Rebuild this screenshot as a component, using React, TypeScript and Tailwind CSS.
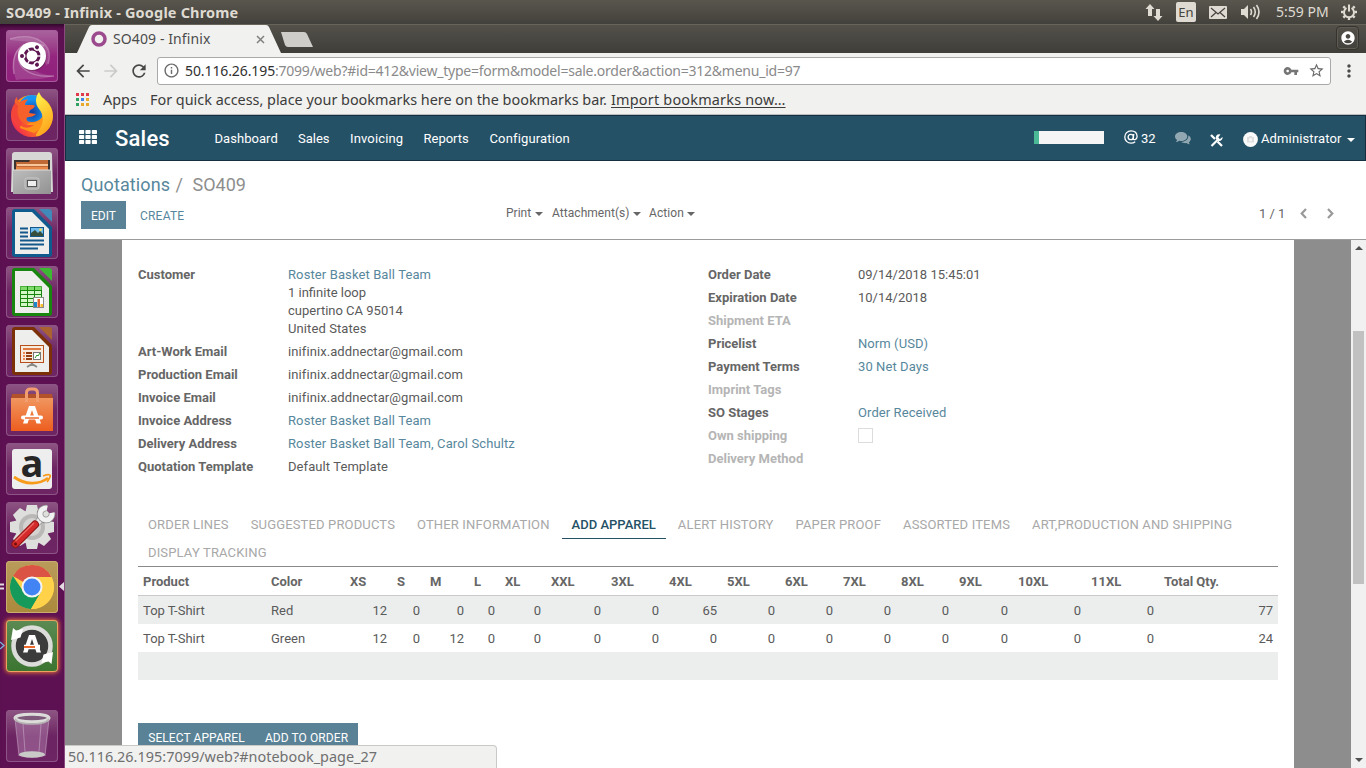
import type { ReactNode } from "react";
import { MdAccountCircle, MdArrowBack, MdArrowForward, MdInfoOutline, MdMoreVert, MdRefresh, MdStarBorder, MdVpnKey } from "react-icons/md";

/* ---------- Launcher icons (52 x 52 viewBox each) ---------- */

const arc3 = [0, 120, 240];
const iconBox = "h-[52px] w-[52px] overflow-visible";

function UbuntuIcon() {
  return (
    <svg viewBox="0 0 52 52" className={iconBox}>
      <g fill="none" stroke="#fff" strokeOpacity=".28" strokeWidth="1.5">
        <path d="M4 9C30 2 48 14 42 34" />
        <path d="M8 44C4 16 22 8 38 16" />
        <path d="M48 46C22 48 8 36 14 20" />
      </g>
      <path d="M3 10C34 2 48 16 41 36L26 12ZM10 50C4 30 8 20 18 14l10 26c6 4 14 5 20 6-14 5-30 2-38 4Z" fill="#fff" fillOpacity=".14" />
      <circle cx="26.500" cy="27" r="14" fill="#000" fillOpacity=".25" />
      <circle cx="26" cy="26" r="14" fill="#fff" />
      <circle cx="26" cy="26" r="7" fill="none" stroke="#5e1650" strokeWidth="3" />
      {arc3.map((a) => (
        <g key={a} transform={`rotate(${a} 26 26)`}>
          <circle cx="16.500" cy="26" r="3" fill="#fff" />
          <circle cx="16" cy="26" r="2" fill="#5e1650" />
          <path d="M31 26h6" stroke="#fff" strokeWidth="1.300" />
        </g>
      ))}
    </svg>
  );
}

function FirefoxIcon() {
  return (
    <svg viewBox="0 0 52 52" className={iconBox}>
      <defs>
        <linearGradient id="ffBody" x1=".9" y1=".1" x2=".1" y2=".8">
          <stop offset="0" stopColor="#ffd629" />
          <stop offset=".5" stopColor="#ff8f12" />
          <stop offset="1" stopColor="#f22f4a" />
        </linearGradient>
        <radialGradient id="ffGlobe" cx=".5" cy=".65">
          <stop offset="0" stopColor="#123b9c" />
          <stop offset="1" stopColor="#1496f5" />
        </radialGradient>
        <linearGradient id="ffTail" x1=".3" y1="0" x2=".6" y2="1">
          <stop offset="0" stopColor="#fff04a" />
          <stop offset="1" stopColor="#ff9f1a" />
        </linearGradient>
      </defs>
      <circle cx="26" cy="27" r="21" fill="url(#ffBody)" />
      <circle cx="26" cy="19.500" r="13.500" fill="url(#ffGlobe)" />
      <path d="M17 30q7 6 14 3 6-3 6-9l3 12-12 8-14-5Z" fill="#ff9218" />
      <path d="M9 15c-1-3 0-5 2-7 0 3 1 4 3 5 3-2 6-3 8-2-2 1-3 3-3 5l8 0c3 0 2 3-3 5l-1 3 7 1c-2 2-4 3-7 3-4 0-3 4 1 6-5 3-17-3-15-19Z" fill="#f6602b" />
      <path d="M5 24q1-7 4-10l3 3q-2 9 3 15 5 5 13 4-5 4-11 2T5 24Z" fill="#f43f3c" fillOpacity=".8" />
      <path d="M33 3c2 6 8 9 11 15 6 11 1 24-11 29-5 1-3-2 0-6 5-7 5-15 0-21-4-5-4-12 0-17Z" fill="url(#ffTail)" />
    </svg>
  );
}

function FilesIcon() {
  return (
    <svg viewBox="0 0 52 52" className={iconBox}>
      <defs>
        <linearGradient id="cab" x1="0" y1="0" x2="1" y2="1">
          <stop offset="0" stopColor="#bdbdbd" />
          <stop offset="1" stopColor="#929292" />
        </linearGradient>
      </defs>
      <path d="M6 7q0-3 3-3h34q3 0 3 3l1 37H5Z" fill="#d7d7d5" />
      <path d="M8 12h36v10H8Z" fill="#3b3431" />
      <path d="M10 14h13l1-2h18v10H10Z" fill="#bf6a36" />
      <path d="M11 16h31v2H11Z" fill="#f7c79b" />
      <path d="M10 19h32v3H10Z" fill="#e78848" />
      <path d="M7 22h38v24H7Z" fill="url(#cab)" />
      <path d="M7 22h38" stroke="#ddd" />
      <rect x="19" y="30" width="14" height="11" rx="2" fill="#a8a8a8" stroke="#c8c8c8" />
      <rect x="21.500" y="32.500" width="9" height="6" fill="#eee" stroke="#555" />
    </svg>
  );
}

function OfficeDoc({ color, fold, children }: { color: string; fold: string; children: ReactNode }) {
  return (
    <svg viewBox="0 0 52 52" className={iconBox}>
      <path d="M9 2H28L46 20V47q0 3-3 3H9q-3 0-3-3V5q0-3 3-3Z" fill={color} />
      <path d="M9 5H26L43 22V47H9Z" fill="#eeeeec" />
      <path d="M33 2H43q3 0 3 3V15Z" fill={fold} />
      {children}
    </svg>
  );
}

function WriterIcon() {
  return (
    <OfficeDoc color="#0f5b8e" fold="#4189b8">
      <path d="M14 21.500h8M14 25.500h8M14 29.500h8M14 33.500h24M14 37.500h24M14 41.500h18" stroke="#12588a" strokeWidth="2" />
      <rect x="24.500" y="20.500" width="13" height="9" fill="#72bdf0" stroke="#12588a" />
      <path d="M25 29v-3l4-3 3 3 2-2 3 3v2Z" fill="#354f3c" />
      <circle cx="34.500" cy="22.800" r="1.300" fill="#ffe14d" />
    </OfficeDoc>
  );
}

function CalcIcon() {
  return (
    <OfficeDoc color="#18850f" fold="#3cb832">
      <path d="M14.500 20.500h21v20h-21Z" fill="#d4f7c8" stroke="#18850f" />
      <path d="M14.500 20.500h21v4h-21Z" fill="#7fdc6a" />
      <path d="M14 24.500h22M14 28.500h22M14 32.500h22M14 36.500h22M21.500 20v21M28.500 20v21" stroke="#18850f" fill="none" />
      <rect x="27.500" y="31.500" width="10" height="10" fill="#fff" stroke="#888" />
      <path d="M28 36h3v5h-3Z" fill="#1c87c9" />
      <path d="M31.500 33h2.500v8h-2.500Z" fill="#e3652b" />
      <path d="M34.500 38h2.500v3h-2.500Z" fill="#f5bf2c" />
    </OfficeDoc>
  );
}

function ImpressIcon() {
  return (
    <OfficeDoc color="#7b3008" fold="#ab6231">
      <rect x="14.500" y="20.500" width="23" height="17" fill="#f8ecdf" stroke="#b5501d" />
      <path d="M17 24h18" stroke="#df7a43" strokeWidth="2" />
      <path d="M17 28h2M17 31h2M17 34h2" stroke="#ef8b57" strokeWidth="2" />
      <path d="M20 28h6M20 31h6M20 34h6" stroke="#963f12" strokeWidth="2" />
      <rect x="27.500" y="27.500" width="7" height="7" fill="#fff" stroke="#777" />
      <path d="M29 33l2-3 1 1 2-3" fill="none" stroke="#2c9b29" />
      <path d="M26 38v2m-5 2l5-3 5 3" fill="none" stroke="#8a8a86" strokeWidth="2" />
    </OfficeDoc>
  );
}

function SoftwareIcon() {
  return (
    <svg viewBox="0 0 52 52" className={iconBox}>
      <defs>
        <linearGradient id="bag" x1="0" y1="0" x2="0" y2="1">
          <stop offset="0" stopColor="#f0965f" />
          <stop offset="1" stopColor="#ed5e1f" />
        </linearGradient>
      </defs>
      <path d="M6 10h40l1 5H5Z" fill="#b3512a" />
      <path d="M5 14h42v33H5Z" fill="url(#bag)" />
      <path d="M20.500 18V9q0-4 4-4h3q4 0 4 4v9" fill="none" stroke="#f19d70" strokeWidth="3" />
      <path d="M17 39.500L23 22H29L35 39.500H30.500L26 26L21.500 39.500Z" fill="#fff" />
      <path d="M17 33.500h18" stroke="#fff" strokeWidth="4" strokeLinecap="round" />
      <path d="M19 34h14" stroke="#ed6c2f" strokeWidth="1.500" />
    </svg>
  );
}

function AmazonIcon() {
  return (
    <svg viewBox="0 0 52 52" className={iconBox}>
      <rect x="6" y="6" width="40" height="40" rx="3" fill="#eeeeee" />
      <text x="26" y="33.500" textAnchor="middle" fontFamily="Open Sans" fontWeight="700" fontSize="38" fill="#262626">a</text>
      <path d="M8 34c11 8 25 8 34 1" fill="none" stroke="#f79b1d" strokeWidth="2.800" />
      <path d="M37 33q9-3 7 1t-3 5" fill="none" stroke="#f79b1d" strokeWidth="1.700" />
    </svg>
  );
}

function SettingsIcon() {
  return (
    <svg viewBox="0 0 52 52" className={iconBox}>
      <g fill="#dededc">
        {[0, 45, 90, 135, 180, 225, 270, 315].map((a) => (
          <path key={a} d="M21 3h10l2 9H19Z" transform={`rotate(${a} 26 25)`} />
        ))}
        <circle cx="26" cy="25" r="17" />
      </g>
      <circle cx="26" cy="25" r="13" fill="#b9b8b6" />
      <circle cx="26" cy="25" r="9" fill="#d4d3d1" />
      <path d="M28 24L37 15" stroke="#999" strokeWidth="7" />
      <path d="M28 24L37 15" stroke="#ececec" strokeWidth="5.500" />
      <path d="M45.900 11A6 6 0 1 1 41 6.100" fill="none" stroke="#8c8c8c" strokeWidth="6.500" />
      <path d="M45.900 10.800A6 6 0 1 1 41.200 6.100" fill="none" stroke="#f1f1f1" strokeWidth="5" />
      <path d="M9.500 42L29 22.500" stroke="#8f1313" strokeWidth="8" strokeLinecap="round" />
      <path d="M9.500 42L29 22.500" stroke="#d42a2a" strokeWidth="6" strokeLinecap="round" />
      <path d="M9.500 39L28 21" stroke="#e96b66" strokeWidth="1.300" />
      <circle cx="9.500" cy="42" r="1.500" fill="#6e0f0f" />
    </svg>
  );
}

function ChromeIcon() {
  return (
    <svg viewBox="0 0 52 52" className={iconBox}>
      <circle cx="26" cy="26" r="22" fill="#ffd24a" />
      <path d="M26 26L6.950 15A22 22 0 0 1 45.500 16H26Z" fill="#da5345" />
      <path d="M6.950 15A22 22 0 0 0 25 48L35 31L26 26L17 30Z" fill="#169a5b" />
      <path d="M26 16H45.500A22 22 0 0 1 25 48L35 31Z" fill="#ffd24a" />
      <circle cx="26" cy="26" r="10.500" fill="#f4f4f4" />
      <circle cx="26" cy="26" r="8.500" fill="#4384f4" />
    </svg>
  );
}

function UpdaterIcon() {
  return (
    <svg viewBox="0 0 52 52" className={iconBox}>
      <circle cx="26" cy="26" r="16.500" fill="#3c3c3c" />
      <circle cx="26" cy="26" r="18.500" fill="none" stroke="#dcdcda" strokeWidth="4.500" />
      <path d="M5 20L7 8l3 2.500L17 9l-2.500 8.500Z" fill="#fff" />
      <path d="M47 32l-1.500 12-3-2.500L35.500 43l2-8.500Z" fill="#fff" />
      <path d="M17 32.500L23 15H29L35 32.500H30.500L26 19L21.500 32.500Z" fill="#fff" />
      <path d="M18 27h16" stroke="#fff" strokeWidth="4.500" />
      <path d="M18 27h11" stroke="#ee6a2a" strokeWidth="2" />
    </svg>
  );
}

function TrashIcon() {
  return (
    <svg viewBox="0 0 52 52" className={iconBox}>
      <path d="M9 9L13 46q13 4 26 0L43 9Z" fill="#b98ab5" fillOpacity=".45" />
      <path d="M9 9L13 46M43 9L39 46M17 14l2 28M35 14l-2 28" stroke="#d9c3d6" strokeOpacity=".45" fill="none" />
      <ellipse cx="26" cy="44.500" rx="13" ry="3.200" fill="#c9c9c7" />
      <ellipse cx="26" cy="8" rx="17" ry="3.800" fill="#7d5a79" stroke="#dcdcda" strokeWidth="3" />
      <path d="M9 9q3 5 17 5t17-5" fill="none" stroke="#b5b4b2" strokeWidth="1.500" />
    </svg>
  );
}

const plain = "bg-linear-to-b from-[#8e5583] via-[#6c2462] to-[#6e2564] inset-ring-[#8d5585]";
const launcher: { icon: ReactNode; tile: string }[] = [
  { icon: <UbuntuIcon />, tile: "bg-linear-to-b from-[#a9659e] via-[#94267f] to-[#8f1f7b] inset-ring-[#a75a9a]" },
  { icon: <FirefoxIcon />, tile: plain },
  { icon: <FilesIcon />, tile: plain },
  { icon: <WriterIcon />, tile: plain },
  { icon: <CalcIcon />, tile: plain },
  { icon: <ImpressIcon />, tile: plain },
  { icon: <SoftwareIcon />, tile: plain },
  { icon: <AmazonIcon />, tile: plain },
  { icon: <SettingsIcon />, tile: plain },
  { icon: <ChromeIcon />, tile: "bg-linear-to-b from-[#b99b5b] to-[#ab893c] inset-ring-[#c9ae70]" },
  { icon: <UpdaterIcon />, tile: "bg-linear-to-b from-[#5b8a52] to-[#3b7431] inset-ring-[#f0a060] shadow-[0_0_4px_1px_#e0703c]" },
];

function Launcher() {
  return (
    <aside className="relative flex w-[65px] shrink-0 flex-col items-center border-r border-[#8a4a80] bg-[#5e1152] pt-[6px] pb-[6px] shadow-[inset_0_5px_4px_-3px_#2c0626]">
      <div className="flex flex-col gap-[7px]">
        {launcher.map((l, i) => (
          <div key={i} className={`h-[52px] w-[52px] rounded-[4px] inset-ring-1 ${l.tile}`}>{l.icon}</div>
        ))}
      </div>
      <div className={`mt-auto h-[52px] w-[52px] rounded-[4px] inset-ring-1 ${plain}`}><TrashIcon /></div>
      <svg className="absolute top-[558px] left-0 h-[10px] w-[5px]" viewBox="0 0 5 10"><path d="M0 2.500h4M0 6.500h4" stroke="#e4dbe2" strokeWidth="2" /></svg>
      <svg className="absolute top-[558px] right-0 h-[9px] w-[5px]" viewBox="0 0 5 9"><path d="M5 0v9L0 4.500Z" fill="#e4dbe2" /></svg>
      <svg className="absolute top-[617px] left-0 h-[9px] w-[5px]" viewBox="0 0 5 9"><path d="M0 1l4 3.500L0 8" fill="none" stroke="#77b5e0" strokeWidth="1.300" /></svg>
    </aside>
  );
}

/* ---------- Desktop bar and browser chrome ---------- */

const ui = "font-['Noto_Sans',sans-serif]";

function TopBar() {
  return (
    <header className={`flex h-6 shrink-0 items-center bg-linear-to-b from-[#59564e] to-[#43413b] text-[#dfdbd2] ${ui}`}>
      <span className="w-[1145px] pl-[6px] text-[14.500px] leading-[22px] font-bold tracking-[0.17px] whitespace-pre">SO409 - Infinix - Google Chrome</span>
      <svg className="h-[18px] w-[18px]" viewBox="0 0 18 18" fill="#dfdbd2"><path d="M5 1l4.500 5H7v7H3V6H.500ZM13 18l-4.500-5H11V6h4v7h2.500Z" /></svg>
      <span className="ml-[13px] flex h-5 w-5 items-center justify-center rounded-[2px] bg-[#dfdbd2] text-[13px] leading-none text-[#45433d]">En</span>
      <svg className="ml-[13px] h-[13px] w-[18px]" viewBox="0 0 18 13"><rect width="18" height="13" rx="1" fill="#dfdbd2" /><path d="M2 2l7 6 7-6M2 11l5-4.500M16 11l-5-4.500" fill="none" stroke="#45433d" strokeWidth="1.200" /></svg>
      <svg className="ml-[13px] h-[18px] w-[21px]" viewBox="0 0 21 18"><path d="M1 6h3l4-4v14l-4-4H1Z" fill="#dfdbd2" /><path d="M10.500 6q2 3 0 6M13.500 4q3.500 5 0 10M16.500 2q5 7 0 14" fill="none" stroke="#dfdbd2" strokeWidth="1.600" /></svg>
      <span className="ml-[15px] w-[54px] text-[14px] leading-[22px] tracking-[0.03px] whitespace-nowrap">5:59 PM</span>
      <svg className="ml-[10px] h-[18px] w-[18px]" viewBox="0 0 18 18">
        <g stroke="#dfdbd2" fill="none"><path d="M6.500 5a5 5 0 1 0 5 0" strokeWidth="2" /><path d="M9 1.500v7" strokeWidth="2" />
          {[45, 90, 135, 180, 225, 270, 315].map((a) => <path key={a} d="M9 1v2.500" strokeWidth="2.400" transform={`rotate(${a} 9 9)`} />)}
        </g>
      </svg>
    </header>
  );
}

function BrowserChrome() {
  return (
    <div className={`shrink-0 bg-[#f1f1ef] ${ui}`}>
      <div className="flex h-[29px] border-t border-[#67645a] bg-linear-to-b from-[#53514a] to-[#403e39]">
        <div className="relative ml-[12px] flex h-[28px] w-[206px] items-center">
          <svg className="absolute inset-0 h-[28px] w-[206px]" viewBox="0 0 206 28"><path d="M0 28L12 2q1-2 3-2H189q2 0 3 2l12 26Z" fill="#f1f1ef" /></svg>
          <svg className="relative ml-[14px] h-[16px] w-[16px]" viewBox="0 0 16 16"><circle cx="8" cy="8" r="6" fill="none" stroke="#9b4a8e" strokeWidth="3.500" /></svg>
          <span className="relative mb-[2px] ml-[6px] w-[97px] text-[14px] tracking-[0.1px] whitespace-nowrap text-[#4c4c4c]">SO409 - Infinix</span>
          <svg className="relative ml-[46px] h-[9px] w-[9px]" viewBox="0 0 9 9"><path d="M1 1l7 7M8 1L1 8" stroke="#808080" strokeWidth="1.500" /></svg>
        </div>
        <svg className="mt-[7px] -ml-[3px] h-[15px] w-[34px]" viewBox="0 0 34 15"><path d="M1 0h23q2 0 3 2l6 13H8q-2 0-3-2Z" fill="#cfcdca" /></svg>
        <div className="mt-[1px] mr-[7px] ml-auto flex h-[24px] w-[23px] items-center justify-center rounded-[4px] border border-[#35332e] text-white shadow-[inset_0_0_0_1px_#5d5b53]"><MdAccountCircle className="h-[16px] w-[16px]" /></div>
      </div>
      <div className="flex h-[35px] items-center">
        <MdArrowBack className="ml-[8px] h-5 w-5 text-[#474747]" />
        <MdArrowForward className="ml-[8px] h-5 w-5 text-[#cbcbcb]" />
        <MdRefresh className="ml-[8px] h-5 w-5 text-[#474747]" />
        <div className="ml-[8px] flex h-[28px] w-[1174px] items-center rounded-[3px] border border-[#a9a9a7] bg-white pl-[5px] text-[14px]">
          <MdInfoOutline className="h-[17px] w-[17px] text-[#6a6a6a]" />
          <span className="ml-[5px] w-[616px] tracking-[-0.240px] whitespace-nowrap text-[#8a8a8a]"><span className="tracking-[-0.1px] text-[#303030]">50.116.26.195</span>:7099/web?#id=412&amp;view_type=form&amp;model=sale.order&amp;action=312&amp;menu_id=97</span>
          <MdVpnKey className="mr-[9px] ml-auto h-[16px] w-[16px] text-[#757575]" />
          <MdStarBorder className="mr-[5px] h-[17px] w-[17px] text-[#6a6a6a]" />
        </div>
        <MdMoreVert className="ml-[8px] h-[20px] w-[20px] text-[#4a4a4a]" />
      </div>
      <div className="flex h-[27px] items-start border-b border-[#b9bdbe] text-[14.400px] leading-[24px] whitespace-nowrap text-[#3c3c3c]">
        <svg className="mt-[5px] ml-[11px] h-[13px] w-[13px]" viewBox="0 0 13 13">
          {["#e03a4b", "#e03a4b", "#e03a4b", "#2fa261", "#4285e8", "#e8a92c", "#2fa261", "#e8a92c", "#e8a92c"].map((c, i) => (
            <rect key={i} x={(i % 3) * 5} y={Math.floor(i / 3) * 5} width="3" height="3" fill={c} />
          ))}
        </svg>
        <span className="ml-[14px] w-[47px]">Apps</span>
        <span className="w-[461px]">For quick access, place your bookmarks here on the bookmarks bar.</span>
        <span className="tracking-[0.220px] underline underline-offset-2">Import bookmarks now…</span>
      </div>
    </div>
  );
}

/* ---------- Application ---------- */

function Caret({ className = "" }: { className?: string }) {
  return <svg className={`h-[4px] w-[8px] ${className}`} viewBox="0 0 8 4" fill="currentColor"><path d="M0 0h8L4 4Z" /></svg>;
}

function NavBar() {
  return (
    <nav className="flex h-[46px] shrink-0 items-center border border-[#162f3e] bg-[#255166] pt-[2px] text-[13px] whitespace-nowrap text-white">
      <svg className="mb-[4px] ml-[13px] h-[14px] w-[18px]" viewBox="0 0 18 14" fill="#fff">
        {[0, 1, 2, 3, 4, 5, 6, 7, 8].map((i) => <rect key={i} x={(i % 3) * 6.4} y={Math.floor(i / 3) * 5} width="5.200" height="4" rx=".7" />)}
      </svg>
      <span className="ml-[18px] w-[99.500px] text-[22px] leading-none font-medium tracking-[0.2px]">Sales</span>
      <span className="w-[83.500px] tracking-[0.050px]">Dashboard</span>
      <span className="w-[52px]">Sales</span>
      <span className="w-[73.500px] tracking-[0.150px]">Invoicing</span>
      <span className="w-[66px]">Reports</span>
      <span className="tracking-[0.150px]">Configuration</span>
      <div className="mb-[3px] ml-auto h-[13px] w-[70px] bg-[#f5f5f5]"><div className="h-full w-[5px] bg-[#4bb896]" /></div>
      <svg className="mb-[4px] ml-[20px] h-[14px] w-[14px]" viewBox="0 0 14 14" fill="none" stroke="#fff" strokeWidth="1.300"><circle cx="6.800" cy="7" r="2.700" /><path d="M9.800 4l-.7 4.500c0 2 4 1.500 4-2C13 3 10.500.8 7 .8 3.500.8.800 3.500.800 7s2.700 6.200 6.200 6.200c1.800 0 3-.5 4.200-1.400" /></svg>
      <span className="ml-[3px] w-[34px]">32</span>
      <svg className="mb-[2px] h-[13px] w-[16px]" viewBox="0 0 16 13" fill="#91a8b2"><path d="M6.200 0C9.600 0 12.300 2 12.300 4.500S9.600 9 6.200 9c-.7 0-1.300-.1-1.900-.2C3.200 9.600 2 10 .8 10c.6-.5 1.100-1.200 1.300-2C.8 7.200 0 6 0 4.500 0 2 2.800 0 6.200 0Z" /><path d="M13.300 3.600c1.600.7 2.500 1.900 2.500 3.400 0 1.400-.8 2.500-2 3.300.2.900.7 1.500 1.200 2-1.300 0-2.500-.4-3.500-1.200-2 .3-4-.2-5.300-1.100 4-.1 7.400-2.500 7.100-6.400Z" /></svg>
      <svg className="mt-[2px] ml-[19px] h-[13px] w-[13px]" viewBox="0 0 13 13"><path d="M1.500 12L9 4.500" stroke="#fff" strokeWidth="2.200" /><path d="M10.500.5L8.500 3v1.500L10 5l2.500-2A3.400 3.400 0 1 1 10.500.5Z" fill="#fff" /><path d="M1 1l4 4M7.500 7.500L12 12" stroke="#fff" strokeWidth="2.300" /></svg>
      <svg className="mt-[1px] ml-[20px] h-[15px] w-[15px]" viewBox="0 0 15 15"><circle cx="7.500" cy="7.500" r="7.400" fill="#fafafa" /><path d="M4 5h1.500l.7-1h2.600l.7 1H11v5.500H4Z" fill="#dfdfdf" /><circle cx="7.500" cy="7.700" r="1.700" fill="#f7f7f7" /></svg>
      <span className="ml-[3px] w-[86px] tracking-[0.130px]">Administrator</span>
      <Caret className="mt-[2px] mr-[10px]" />
    </nav>
  );
}

function ControlPanel() {
  return (
    <div className="flex h-[79px] shrink-0 flex-col border-b border-[#9b9b9b] px-4 pt-[11px] whitespace-nowrap">
      <div className="flex h-[24px] items-center text-[18px] text-[#8e8e8e]">
        <span className="w-[94.500px] tracking-[0.120px] text-[#57879c]">Quotations</span>
        <span className="w-[17px]">/</span>
        <span>SO409</span>
      </div>
      <div className="mt-[5px] flex h-[28px] text-[12px] leading-[30px]">
        <button className="h-[28px] w-[45px] bg-[#5a8296] text-center text-white">EDIT</button>
        <button className="ml-[14px] w-[46px] text-left tracking-[0.200px] text-[#57879c]">CREATE</button>
        <div className="ml-[320px] flex h-[24px] items-center text-[12px] leading-[24px] text-[#666]">
          <span className="w-[29px]">Print</span><Caret className="mt-[2px]" />
          <span className="ml-[9px] w-[81px] tracking-[0.050px]">Attachment(s)</span><Caret className="mt-[2px]" />
          <span className="ml-[8px] w-[38px] tracking-[0.100px]">Action</span><Caret className="mt-[2px]" />
        </div>
        <div className="ml-auto flex h-[25px] items-center text-[13px] text-[#666]">
          <span className="w-[41px]">1 / 1</span>
          <svg className="h-[11px] w-[7px]" viewBox="0 0 7 11"><path d="M6 1L1.700 5.500 6 10" fill="none" stroke="#999" strokeWidth="2.200" /></svg>
          <svg className="mr-[16px] ml-[20px] h-[11px] w-[7px]" viewBox="0 0 7 11"><path d="M1 1l4.300 4.500L1 10" fill="none" stroke="#999" strokeWidth="2.200" /></svg>
        </div>
      </div>
    </div>
  );
}

type Field = { label: string; value?: ReactNode; link?: boolean; muted?: boolean };

const email = <span className="tracking-[0.090px]">inifinix.addnectar@gmail.com</span>;

const left: Field[] = [
  { label: "Customer", value: <><span className="tracking-[0.110px] text-[#57879c]">Roster Basket Ball Team</span><br />1 infinite loop<br />cupertino CA 95014<br /><span className="tracking-[0.100px]">United States</span></> },
  { label: "Art-Work Email", value: email },
  { label: "Production Email", value: email },
  { label: "Invoice Email", value: email },
  { label: "Invoice Address", value: <span className="tracking-[0.110px]">Roster Basket Ball Team</span>, link: true },
  { label: "Delivery Address", value: <span className="tracking-[0.110px]">Roster Basket Ball Team, Carol Schultz</span>, link: true },
  { label: "Quotation Template", value: <span className="tracking-[0.080px]">Default Template</span> },
];

const right: Field[] = [
  { label: "Order Date", value: "09/14/2018 15:45:01" },
  { label: "Expiration Date", value: "10/14/2018" },
  { label: "Shipment ETA", muted: true },
  { label: "Pricelist", value: <span className="tracking-[0.080px]">Norm (USD)</span>, link: true },
  { label: "Payment Terms", value: <span className="tracking-[0.080px]">30 Net Days</span>, link: true },
  { label: "Imprint Tags", muted: true },
  { label: "SO Stages", value: <span className="tracking-[0.080px]">Order Received</span>, link: true },
  { label: "Own shipping", muted: true, value: <span className="mt-[1px] -mb-[1px] block h-[15px] w-[15px] border border-[#dcdcdc] bg-white" /> },
  { label: "Delivery Method", muted: true },
];

function FieldGroup({ fields }: { fields: Field[] }) {
  return (
    <dl className="w-[570px]">
      {fields.map((f) => (
        <div key={f.label} className="flex min-h-[23px]">
          <dt className={`w-[150px] font-bold ${f.muted ? "text-[#b5b5b5]" : "text-[#666]"}`}>{f.label}</dt>
          <dd className={f.link ? "mb-[5px] text-[#57879c]" : "mb-[5px] text-[#5a5a5a]"}>{f.value}</dd>
        </div>
      ))}
    </dl>
  );
}

const tabs = ["ORDER LINES", "SUGGESTED PRODUCTS", "OTHER INFORMATION", "ADD APPAREL", "ALERT HISTORY", "PAPER PROOF", "ASSORTED ITEMS", "ART,PRODUCTION AND SHIPPING", "DISPLAY TRACKING"];
const columns = ["Product", "Color", "XS", "S", "M", "L", "XL", "XXL", "3XL", "4XL", "5XL", "6XL", "7XL", "8XL", "9XL", "10XL", "11XL", "Total Qty."];
const rows = [
  ["Top T-Shirt", "Red", "12", "0", "0", "0", "0", "0", "0", "65", "0", "0", "0", "0", "0", "0", "0", "77"],
  ["Top T-Shirt", "Green", "12", "0", "12", "0", "0", "0", "0", "0", "0", "0", "0", "0", "0", "0", "0", "24"],
];
const grid = "grid grid-cols-[128px_79px_47px_33px_44px_31px_46px_60px_58px_58px_58px_58px_58px_58px_59px_73px_73px_119px] leading-[30px]";

function Sheet() {
  return (
    <div className="w-[1172px] bg-white px-4 pt-[26px] text-[13px] leading-[18px] whitespace-nowrap text-[#5a5a5a]">
      <div className="flex h-[245px]">
        <FieldGroup fields={left} />
        <FieldGroup fields={right} />
      </div>
      <div className="flex h-[56px] flex-wrap gap-x-[2px] border-b border-[#8a8a8a] text-[#a8a8a8]">
        {tabs.map((t) => (
          <div key={t} className={t === "ADD APPAREL" ? "h-[28px] border-b border-[#255166] px-[10px] leading-[28px] font-medium text-[#255166]" : "h-[28px] px-[10px] leading-[28px] tracking-[0.150px]"}>{t}</div>
        ))}
      </div>
      <div className={`${grid} h-[29px] border-b border-[#cacaca] font-bold text-[#666]`}>
        {columns.map((c) => <span key={c} className="pl-[5px]">{c}</span>)}
      </div>
      {rows.map((r, i) => (
        <div key={i} className={`${grid} ${i === 0 ? "h-[28px] bg-[#eceeee]" : "h-[28px] bg-white"}`}>
          {r.map((v, j) => <span key={j} className={j < 2 ? "px-[5px]" : "px-[5px] text-right"}>{v}</span>)}
        </div>
      ))}
      <div className="h-[28px] bg-[#eceeee]" />
      <div className="mt-[43px] flex text-[12px] leading-[30px] text-white">
        <button className="h-[29px] w-[117px] bg-[#5a8296] tracking-[0.080px]">SELECT APPAREL</button>
        <button className="h-[29px] w-[103px] bg-[#5a8296] tracking-[0.080px]">ADD TO ORDER</button>
      </div>
    </div>
  );
}

export default function App() {
  return (
    <div className="flex h-[768px] w-[1366px] flex-col overflow-hidden font-[Roboto,sans-serif]">
      <TopBar />
      <div className="flex min-h-0 flex-1">
        <Launcher />
        <main className="relative flex min-w-0 flex-1 flex-col bg-white">
          <BrowserChrome />
          <NavBar />
          <ControlPanel />
          <div className="flex min-h-0 flex-1 overflow-hidden bg-[#8d8d8d] pl-[57px]">
            <Sheet />
            <div className="ml-auto flex w-[15px] flex-col items-center justify-between bg-[#f1f1f1] py-[6px]">
              <svg className="h-[4px] w-[8px]" viewBox="0 0 8 4"><path d="M0 4h8L4 0Z" fill="#505050" /></svg>
              <div className="mb-[93px] h-[253px] w-[11px] bg-[#c1c1c1]" />
              <svg className="h-[4px] w-[8px]" viewBox="0 0 8 4"><path d="M0 0h8L4 4Z" fill="#505050" /></svg>
            </div>
          </div>
          <div className={`absolute bottom-0 left-0 h-[23px] w-[432px] rounded-tr-[4px] border-t border-r border-[#c9c9c7] bg-[#f1f1ef] pl-[3px] text-[14.400px] leading-[22px] tracking-[0.030px] whitespace-nowrap text-[#6f6f6f] ${ui}`}>50.116.26.195:7099/web?#notebook_page_27</div>
        </main>
      </div>
    </div>
  );
}
